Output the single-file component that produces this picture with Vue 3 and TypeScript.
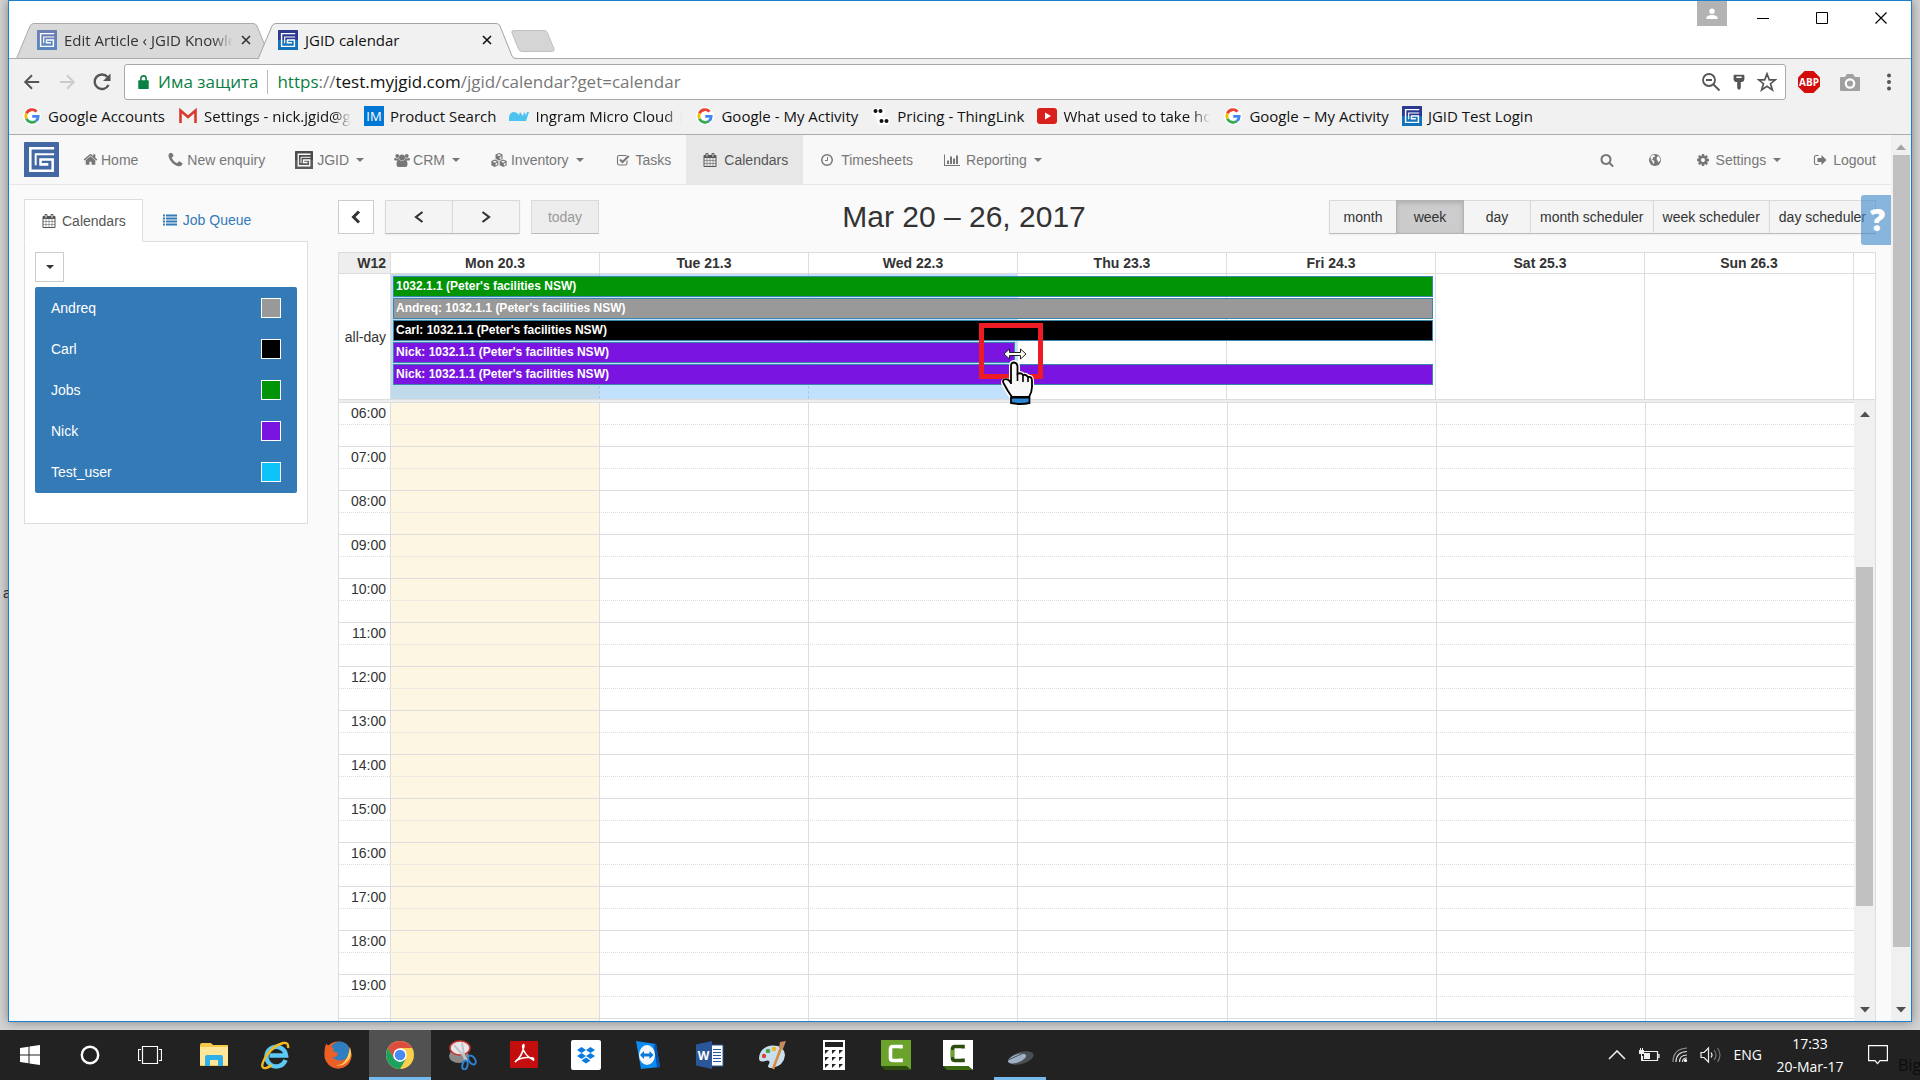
<script setup lang="ts">
import { h, ref, type FunctionalComponent } from 'vue'

interface Bookmark { icon: string; label: string; cut?: boolean }
interface NavItem { icon: string; label: string; caret?: boolean; active?: boolean }
interface CalendarEvent { title: string; color: string; span: number; resizing?: boolean }
interface CalendarOwner { name: string; color: string }

const bookmarks: Bookmark[] = [
  { icon: 'google', label: 'Google Accounts' },
  { icon: 'gmail', label: 'Settings - nick.jgid@g', cut: true },
  { icon: 'im', label: 'Product Search' },
  { icon: 'cloud', label: 'Ingram Micro Cloud |', cut: true },
  { icon: 'google', label: 'Google - My Activity' },
  { icon: 'thing', label: 'Pricing - ThingLink' },
  { icon: 'youtube', label: 'What used to take hou', cut: true },
  { icon: 'google', label: 'Google – My Activity' },
  { icon: 'jgid', label: 'JGID Test Login' },
]

const nav: NavItem[] = [
  { icon: 'home', label: 'Home' },
  { icon: 'phone', label: 'New enquiry' },
  { icon: 'jgidGray', label: 'JGID', caret: true },
  { icon: 'users', label: 'CRM', caret: true },
  { icon: 'cubes', label: 'Inventory', caret: true },
  { icon: 'check', label: 'Tasks' },
  { icon: 'calendar', label: 'Calendars', active: true },
  { icon: 'clock', label: 'Timesheets' },
  { icon: 'chart', label: 'Reporting', caret: true },
]

const owners: CalendarOwner[] = [
  { name: 'Andreq', color: '#999999' },
  { name: 'Carl', color: '#000000' },
  { name: 'Jobs', color: '#009406' },
  { name: 'Nick', color: '#7a14e0' },
  { name: 'Test_user', color: '#0dc4f9' },
]

const days = ['Mon 20.3', 'Tue 21.3', 'Wed 22.3', 'Thu 23.3', 'Fri 24.3', 'Sat 25.3', 'Sun 26.3']
const hours = Array.from({ length: 14 }, (_, i) => `${String(i + 6).padStart(2, '0')}:00`)
const views = ['month', 'week', 'day', 'month scheduler', 'week scheduler', 'day scheduler']
const view = ref('week')
const address = ref('https://test.myjgid.com/jgid/calendar?get=calendar')

const events: CalendarEvent[] = [
  { title: "1032.1.1 (Peter's facilities NSW)", color: '#009406', span: 5 },
  { title: "Andreq: 1032.1.1 (Peter's facilities NSW)", color: '#999999', span: 5 },
  { title: "Carl: 1032.1.1 (Peter's facilities NSW)", color: '#000000', span: 5 },
  { title: "Nick: 1032.1.1 (Peter's facilities NSW)", color: '#7a14e0', span: 3, resizing: true },
  { title: "Nick: 1032.1.1 (Peter's facilities NSW)", color: '#7a14e0', span: 5 },
]

const logo = (a: string, b: string) =>
  `<rect width="36" height="36" rx="1" fill="${a}"/><rect y="18" width="36" height="18" rx="1" fill="${b}"/>
   <path d="M31 6.500H6.500V29.500H29.500V18H17V23H25" fill="none" stroke="#fff" stroke-width="2.600"/><path d="M31 12.500H12V24" fill="none" stroke="#fff" stroke-width="2"/>`

const icons: Record<string, [string, string]> = {
  jgid: ['0 0 36 36', logo('#2b3990', '#1273ba')],
  jgidPale: ['0 0 36 36', logo('#6a7fb5', '#5c86c0')],
  jgidGray: ['0 0 36 36', logo('#4a4a4a', '#5c5c5c')],
  jgidNav: ['0 0 36 36', logo('#4468a4', '#4468a4')],
  home: ['0 0 1792 1792', '<path d="M1472 992v480q0 26-19 45t-45 19h-384v-384h-256v384h-384q-26 0-45-19t-19-45v-480q0-1 .5-3t.5-3l575-474 575 474q1 2 1 6zm223-69l-62 74q-8 9-21 11h-3q-13 0-21-7l-692-577-692 577q-12 8-24 7-13-2-21-11l-62-74q-8-10-7-23.500t11-21.500l719-599q32-26 76-26t76 26l244 204v-195q0-14 9-23t23-9h192q14 0 23 9t9 23v408l219 182q10 8 11 21.500t-7 23.500z"/>'],
  phone: ['192 192 1408 1408', '<path d="M1600 1240q0 27-10 70.500t-21 68.500q-21 50-122 106-94 51-186 51-27 0-53-3.500t-57.500-12.500-47-14.500-55.500-20.500-49-18q-98-35-175-83-127-79-264-216t-216-264q-48-77-83-175-3-9-18-49t-20.500-55.500-14.500-47-12.500-57.500-3.500-53q0-92 51-186 56-101 106-122 25-11 68.500-21t70.500-10q14 0 21 3 18 6 53 76 11 19 30 54t35 63.500 31 53.500q3 4 17.500 25t21.500 35.500 7 28.500q0 20-28.500 50t-62 55-62 53-28.500 46q0 9 5 22.500t8.500 20.500 14 24 11.500 19q76 137 174 235t235 174q2 1 19 11.500t24 14 20.500 8.500 22.500 5q18 0 46-28.500t53-62 55-62 50-28.500q14 0 28.500 7t35.500 21.500 25 17.500q25 15 53.500 31t63.500 35 54 30q70 35 76 53 3 7 3 21z"/>'],
  users: ['0 0 32 28', '<circle cx="6.500" cy="6" r="3.800"/><circle cx="25.500" cy="6" r="3.800"/><path d="M0 12q1-3 3-2 3.500 2 6.500 0 0 3 2 5H3q-3 0-3-3zM32 12q-1-3-3-2-3.500 2-6.500 0 0 3-2 5H29q3 0 3-3z"/><circle cx="16" cy="9" r="6"/><path d="M5 23q0-9 5-9.500 6 4 12 0 5 .5 5 9.500 0 5-4.500 5h-13Q5 28 5 23z"/>'],
  cubes: ['0 0 36 32', '<path fill-rule="evenodd" d="M18 0l8 3.500V13l-8 4-8-4V3.500zM18 2.500L13 5l5 2 5-2zM19.500 9.500v4.500l4-2V7.500zM8.500 15l8 3.500V28l-8 4-8-4v-9.500zM8.500 17.500L3.500 20l5 2 5-2zM10 24.500V29l4-2v-4.500zM27.500 15l8 3.500V28l-8 4-8-4v-9.500zM27.500 17.500l-5 2.500 5 2 5-2zM29 24.500V29l4-2v-4.500z"/>'],
  check: ['0 0 28 28', '<path d="M22 15v5.500Q22 24 18.500 24h-12Q3 24 3 20.500v-12Q3 5 6.500 5h12q1.500 0 2.500.5" fill="none" stroke="currentColor" stroke-width="2.200"/><path d="M8 13l5 5L25.500 6" fill="none" stroke="currentColor" stroke-width="4"/>'],
  calendar: ['0 0 1792 1792', '<path d="M192 1664h288v-288h-288v288zm352 0h320v-288h-320v288zm-352-352h288v-320h-288v320zm352 0h320v-320h-320v320zm-352-384h288v-288h-288v288zm736 736h320v-288h-320v288zm-384-736h320v-288h-320v288zm768 736h288v-288h-288v288zm-384-352h320v-320h-320v320zm-352-864v-288q0-13-9.500-22.500t-22.500-9.500h-64q-13 0-22.500 9.500t-9.500 22.500v288q0 13 9.500 22.500t22.500 9.500h64q13 0 22.500-9.500t9.500-22.500zm736 864h288v-320h-288v320zm-384-384h320v-288h-320v288zm384 0h288v-288h-288v288zm32-480v-288q0-13-9.500-22.500t-22.500-9.500h-64q-13 0-22.500 9.500t-9.500 22.500v288q0 13 9.500 22.500t22.500 9.500h64q13 0 22.500-9.500t9.500-22.500zm384-64v1280q0 52-38 90t-90 38h-1408q-52 0-90-38t-38-90v-1280q0-52 38-90t90-38h128v-96q0-66 47-113t113-47h64q66 0 113 47t47 113v96h384v-96q0-66 47-113t113-47h64q66 0 113 47t47 113v96h128q52 0 90 38t38 90z"/>'],
  clock: ['0 0 28 28', '<circle cx="14" cy="14" r="10.500" fill="none" stroke="currentColor" stroke-width="3"/><path d="M15 8v7h-5" fill="none" stroke="currentColor" stroke-width="2"/>'],
  chart: ['0 0 32 28', '<path d="M0 3h2v21h30v2H0zM6 15h4v7H6zM12 7h4v15h-4zM18 11h4v11h-4zM24 5h4v17h-4z"/>'],
  search: ['0 0 1792 1792', '<path d="M1216 832q0-185-131.500-316.500t-316.500-131.500-316.500 131.500-131.500 316.500 131.500 316.500 316.500 131.500 316.500-131.500 131.500-316.500zm512 832q0 52-38 90t-90 38q-54 0-90-38l-343-342q-179 124-399 124-143 0-273.500-55.500t-225-150-150-225-55.500-273.500 55.500-273.500 150-225 225-150 273.500-55.500 273.500 55.500 225 150 150 225 55.500 273.500q0 220-124 399l343 343q37 37 37 90z"/>'],
  globe: ['0 0 28 28', '<circle cx="14" cy="14" r="12"/><path d="M5 7q4-4 8-3l1 3-4 2v2l-3 2 3 1 3 3-2 5q-2-1-2-5-4-2-4-10zM18 8l3-2q4 4 4 8l-4 5-2-4-2-3z" fill="#f8f8f8"/>'],
  gear: ['0 0 1792 1792', '<path d="M1152 896q0-106-75-181t-181-75-181 75-75 181 75 181 181 75 181-75 75-181zm512-109v222q0 12-8 23t-20 13l-185 28q-19 54-39 91 35 50 107 138 10 12 10 25t-9 23q-27 37-99 108t-94 71q-12 0-26-9l-138-108q-44 23-91 38-16 136-29 186-7 28-36 28h-222q-14 0-24.500-8.500t-11.500-21.500l-28-184q-49-16-90-37l-141 107q-10 9-25 9-14 0-25-11-126-114-165-168-7-10-7-23 0-12 8-23 15-21 51-66.500t54-70.500q-27-50-41-99l-183-27q-13-2-21-12.500t-8-23.500v-222q0-12 8-23t19-13l186-28q14-46 39-92-40-57-107-138-10-12-10-24 0-10 9-23 26-36 98.500-107.500t94.500-71.500q13 0 26 10l138 107q44-23 91-38 16-136 29-186 7-28 36-28h222q14 0 24.500 8.500t11.500 21.500l28 184q49 16 90 37l142-107q9-9 24-9 13 0 25 10 129 119 165 170 7 8 7 22 0 12-8 23-15 21-51 66.500t-54 70.500q26 50 41 98l183 28q13 2 21 12.500t8 23.500z"/>'],
  logout: ['0 0 28 28', '<path d="M11 5H6Q3 5 3 8v12q0 3 3 3h5" fill="none" stroke="currentColor" stroke-width="2.200"/><path d="M9 10h8V4l10 10-10 10v-6H9z"/>'],
  list: ['0 0 28 28', '<path d="M0 3h4v4H0zM6 3h22v4H6zM0 9h4v4H0zM6 9h22v4H6zM0 15h4v4H0zM6 15h22v4H6zM0 21h4v4H0zM6 21h22v4H6z"/>'],
  chevronLeft: ['0 0 14 14', '<path d="M10 1.500L4.500 7l5.500 5.500" fill="none" stroke="currentColor" stroke-width="3"/>'],
  angleLeft: ['0 0 14 14', '<path d="M10.500 2L4 7l6.500 5" fill="none" stroke="currentColor" stroke-width="2.200"/>'],
  angleRight: ['0 0 14 14', '<path d="M3.500 2L10 7l-6.500 5" fill="none" stroke="currentColor" stroke-width="2.200"/>'],
  back: ['0 0 20 20', '<path d="M18 10H3M10 2.500L2.500 10l7.500 7.500" fill="none" stroke="currentColor" stroke-width="2.200"/>'],
  forward: ['0 0 20 20', '<path d="M2 10h15M10 2.500l7.500 7.500-7.500 7.500" fill="none" stroke="currentColor" stroke-width="2.200"/>'],
  reload: ['0 0 20 20', '<path d="M16.500 13A7.300 7.300 0 1 1 15.500 5" fill="none" stroke="currentColor" stroke-width="2.400"/><path d="M18.500 1.500v7.500H11z"/>'],
  lock: ['0 0 12 16', '<path d="M1 6h10q1 0 1 1v8q0 1-1 1H1q-1 0-1-1V7q0-1 1-1z"/><path d="M3 7V4a3 3 0 0 1 6 0v3" fill="none" stroke="currentColor" stroke-width="1.800"/>'],
  zoomOut: ['0 0 20 20', '<circle cx="8" cy="8" r="6" fill="none" stroke="currentColor" stroke-width="1.800"/><path d="M5 8h6M12.500 12.500l6 6" stroke="currentColor" stroke-width="1.800"/>'],
  key: ['0 0 16 20', '<path fill-rule="evenodd" d="M3 2h10q1 0 1 1v4q0 2-2 3h-2v7l-2 2-2-2v-7H4Q2 9 2 7V3q0-1 1-1zm2 2v1.500h6V4z"/>'],
  star: ['0 0 20 20', '<path d="M10 1.800l2.300 6h6.100l-4.900 3.900 1.900 6.200L10 14.300l-5.400 3.600 1.900-6.200L1.600 7.800h6.100z" fill="none" stroke="currentColor" stroke-width="1.700"/>'],
  abp: ['0 0 22 22', '<path d="M6.500 0h9L22 6.500v9L15.500 22h-9L0 15.500v-9z" fill="#d40c0c"/><text x="11" y="14.500" text-anchor="middle" font-family="Open Sans, sans-serif" font-weight="700" font-size="10" fill="#fff">ABP</text>'],
  camera: ['0 0 20 18', '<path d="M7 1h6l2 3h4q1 0 1 1v12q0 1-1 1H1q-1 0-1-1V5q0-1 1-1h4z" fill="#a0a0a0"/><circle cx="10" cy="10.500" r="4.200" fill="#a0a0a0" stroke="#fff" stroke-width="2.200"/>'],
  dots: ['0 0 6 18', '<circle cx="3" cy="2.500" r="2"/><circle cx="3" cy="9" r="2"/><circle cx="3" cy="15.500" r="2"/>'],
  person: ['0 0 12 12', '<circle cx="6" cy="3.200" r="2.700"/><path d="M.5 11V9.500Q1 7 6 7t5.500 2.500V11z"/>'],
  minimize: ['0 0 12 12', '<path d="M0 6.500h12" stroke="currentColor"/>'],
  maximize: ['0 0 12 12', '<path d="M.5.5h11v11H.5z" fill="none" stroke="currentColor"/>'],
  close: ['0 0 12 12', '<path d="M.5.5l11 11M11.500.5l-11 11" stroke="currentColor" stroke-width="1.200"/>'],
  tabClose: ['0 0 10 10', '<path d="M1 1l8 8M9 1L1 9" stroke="currentColor" stroke-width="1.600"/>'],
  google: ['0 0 20 20', '<circle cx="10" cy="10" r="9" fill="#fff"/><g fill="none" stroke-width="2.800"><path d="M14.600 5.600A6.200 6.200 0 0 0 4.400 7.400" stroke="#ea4335"/><path d="M4.400 7.400a6.200 6.200 0 0 0 0 5.300" stroke="#fbbc05"/><path d="M4.400 12.700a6.200 6.200 0 0 0 9.600 2.300" stroke="#34a853"/><path d="M14 15a6.200 6.200 0 0 0 2.200-4.600H10.200" stroke="#4285f4"/></g>'],
  gmail: ['0 0 20 16', '<path d="M1 1h18v14H1z" fill="#f2f2f2"/><path d="M2.500 15V2.500L10 9l7.500-6.500V15" fill="none" stroke="#d93a2f" stroke-width="2.600"/>'],
  im: ['0 0 20 20', '<path d="M0 0h20v20H0z" fill="#0077d4"/><text x="10" y="15" text-anchor="middle" font-family="Open Sans, sans-serif" font-size="13" fill="#fff">IM</text>'],
  cloud: ['0 0 20 12', '<path d="M0 11V7q1-5 5-5 3 0 5 3l1-3 3 4 1-4 2 3 1-3h2l-3 9z" fill="#4cc3f0"/>'],
  thing: ['0 0 20 20', '<g fill="#fff"><circle cx="5" cy="6" r="4"/><circle cx="10" cy="6" r="4"/><circle cx="10" cy="15" r="4"/><circle cx="15" cy="15" r="4"/><circle cx="8" cy="11" r="3"/></g><circle cx="4.500" cy="5" r="2" fill="#111"/><circle cx="9.500" cy="5" r="2" fill="#111"/><circle cx="10.500" cy="15" r="2" fill="#111"/><circle cx="15.500" cy="15" r="2" fill="#111"/>'],
  youtube: ['0 0 20 16', '<rect width="20" height="16" rx="3" fill="#d8201c"/><path d="M8 4.500l6 3.500-6 3.500z" fill="#fff"/>'],
  caretUp: ['0 0 10 6', '<path d="M0 6l5-5.500L10 6z"/>'],
  caretDown: ['0 0 10 6', '<path d="M0 0l5 5.500L10 0z"/>'],
  resize: ['0 0 24 12', '<path d="M1 6l5.500-5v3.500h11V1L23 6l-5.500 5V7.500h-11V11z" fill="#fff" stroke="#222"/>'],
  hand: ['0 0 34 46', '<path d="M11 24V6q0-4 3-4t4 4v8q3-2 5.500 1 3-1 4.500 2 4-1 4 4v6q0 5-3 10v7H12v-6q-5-7-8-13-2-3 0-4.500 4-1.500 7 3.500z" fill="#fff" stroke="#fff" stroke-width="4"/><path d="M11 24V6q0-3.500 3-3.500T17.500 6v8q3.500-2 5.500 1 3-1 5 2 4-1 4 4v6q0 5-3 10H12q-5-7-8-13-2-3 0-4.500 4-1.500 7 3.500z" fill="#f8f8f8" stroke="#000" stroke-width="1.800"/><path d="M17.500 14v7M23 15v7M28 17v5" stroke="#000" stroke-width="1.600"/><path d="M11 37.500h18.500v5.500q-9 2-18.500 0z" fill="#2c86d2" stroke="#000" stroke-width="1.800"/>'],
  windows: ['0 0 20 20', '<path d="M0 3l8.500-1.200V9.500H0zM9.500 1.600L20 0v9.500H9.500zM0 10.500h8.500v7.700L0 17zM9.500 10.500H20V20L9.500 18.400z" fill="#fff"/>'],
  cortana: ['0 0 20 20', '<circle cx="10" cy="10" r="8.200" fill="none" stroke="#fff" stroke-width="2.400"/>'],
  taskView: ['0 0 24 20', '<path d="M4.500 1.500h15v17h-15zM3 4.500H.5v11H3M21 4.500h2.500v11H21" fill="none" stroke="#fff" stroke-width="1.200"/>'],
  folder: ['0 0 30 30', '<path d="M1 5q0-2 2-2h9l2 2h15v21H1z" fill="#f5c84a"/><path d="M1 7h28v18H1z" fill="#ffe699"/><path d="M6 26v-9q0-2 2-2h14q2 0 2 2v9h-5v-6h-8v6z" fill="#2fb0e8"/>'],
  ie: ['0 0 30 30', '<path d="M24.500 20A9.800 9.800 0 1 1 25 15.500H8.500" fill="none" stroke="#5cc8f6" stroke-width="4.500"/><path d="M27 8q1-6-5-5Q11 6 4 18q-6 11 1 10 3-.5 6-3" fill="none" stroke="#f4bb1e" stroke-width="2.400"/>'],
  firefox: ['0 0 30 30', '<circle cx="15" cy="15" r="13.500" fill="#e8612a"/><circle cx="17" cy="11" r="9.500" fill="#2e7fc2"/><path d="M27 7q2 8-2 13-6 8-14 4-5-3-3-8 3 2 6 0l1-3-4-1-1-4-7-4Q0 12 3 20q4 8 12 8.500 13-1 13.500-14z" fill="#ee5f25"/><path d="M27 7q3 10-3 15-5 5-11 3 11 1 14-18z" fill="#fbd35c"/>'],
  chrome: ['0 0 30 30', '<circle cx="15" cy="15" r="14" fill="#fcd04b"/><path d="M2.900 8A14 14 0 0 1 27.100 8H15l-6 10.500z" fill="#dc4d40"/><path d="M2.900 8A14 14 0 0 0 15 29l6.100-10.500L15 22l-6-3.500z" fill="#1ba260"/><circle cx="15" cy="15" r="6.800" fill="#fff"/><circle cx="15" cy="15" r="5.300" fill="#4a8af4"/>'],
  snip: ['0 0 30 30', '<ellipse cx="12" cy="16" rx="10" ry="7" fill="#8a8a8a"/><ellipse cx="13" cy="8" rx="10" ry="7" fill="#e8e8ec" stroke="#c63a33" stroke-width="1.500"/><path d="M7 5l14 16M15 3l3 18" stroke="#c0c4c8" stroke-width="2"/><ellipse cx="25" cy="20" rx="3" ry="5" fill="none" stroke="#2f7fd2" stroke-width="2" transform="rotate(-35 25 20)"/><ellipse cx="18" cy="25" rx="2.500" ry="4.500" fill="none" stroke="#2f7fd2" stroke-width="2" transform="rotate(15 18 25)"/>'],
  acrobat: ['0 0 30 30', '<path d="M1 1h28v27H1z" fill="#c40d0d"/><path d="M6 22q7-5 9-16 0-3-1.500 0 1 9 11 14 1-3-7-2.500Q10 18 6 22" fill="none" stroke="#fff" stroke-width="1.600"/>'],
  dropbox: ['0 0 30 30', '<rect width="30" height="30" rx="2" fill="#fff"/><path d="M10.500 7l4.500 3-4.500 3L6 10zM19.500 7l4.500 3-4.500 3-4.500-3zM10.500 13l4.500 3-4.500 3L6 16zM19.500 13l4.500 3-4.500 3-4.500-3zM15 17.500l4.500 3L15 23.500l-4.500-3z" fill="#0a7be0"/>'],
  teamviewer: ['0 0 30 30', '<path d="M3 1l20 3 4 23-19 2z" fill="#0a8cf0"/><path d="M23 4l4 23-3 1-3-23z" fill="#0650b0"/><ellipse cx="14" cy="15" rx="8" ry="10" fill="#f4f8fc"/><path d="M7 15l4-4v2.500h5.500V11l4 4-4 4v-2.500H11V19z" fill="#0a78d8"/>'],
  word: ['0 0 30 30', '<path d="M15 5h13v21H15z" fill="#fff" stroke="#2b579a"/><path d="M18 9.500h8M18 12.500h8M18 15.500h8M18 18.500h8M18 21.500h8" stroke="#2b579a" stroke-width="1.200"/><path d="M1 4.500L17 1v28L1 25.500z" fill="#2b579a"/><text x="8.500" y="20" text-anchor="middle" font-family="Open Sans, sans-serif" font-weight="700" font-size="12" fill="#fff">W</text>'],
  paint: ['0 0 30 30', '<path d="M2 18Q3 7 15 5.500q12-.5 13 9.500-1 11-13 13-6 0-3-4 2-5-4-3-6 2-6-3z" fill="#c8dff0"/><circle cx="7" cy="16" r="2.200" fill="#d8433b"/><circle cx="11" cy="11" r="2.300" fill="#4aa34a"/><circle cx="17" cy="9" r="2.300" fill="#f0b52a"/><path d="M16 29l8-21" stroke="#d98b3a" stroke-width="2.600"/><path d="M22 8l1-6 6-1-3 8z" fill="#c58b5c"/>'],
  calc: ['0 0 30 30', '<path d="M4 0h22v30H4z" fill="#fff"/><path d="M6 2h18v5H6zM6 10h4l-4 4zM13 10h4l-4 4zM20 10h4l-4 4zM6 17h4l-4 4zM13 17h4l-4 4zM20 17h4l-4 4zM6 24h4l-4 4zM13 24h4l-4 4zM20 24h4l-4 4z" fill="#222"/>'],
  camtasia: ['0 0 30 30', '<path d="M0 0h30v30l-5-4H0z" fill="#6aa22c"/><path d="M0 26h25l5 4H4z" fill="#2c4d0e"/><path d="M20 8.500V6.500H12Q9.500 6.500 9.500 9v9q0 2.500 2.500 2.500h8V18.500" fill="none" stroke="#fff" stroke-width="3.600"/>'],
  camtasiaLight: ['0 0 30 30', '<path d="M0 0h30v30l-5-4H0z" fill="#fff"/><path d="M0 26h25l5 4H4z" fill="#3c6a10"/><path d="M20 8.500V6.500H12Q9.500 6.500 9.500 9v9q0 2.500 2.500 2.500h8V18.500" fill="none" stroke="#2c4d0e" stroke-width="3.600"/><path d="M9.500 10v7" stroke="#6aa22c" stroke-width="3.600"/>'],
  mouse: ['0 0 30 30', '<ellipse cx="16" cy="18" rx="13" ry="6" fill="#4b4f55" transform="rotate(-16 16 18)"/><ellipse cx="12" cy="18.500" rx="9.500" ry="4" fill="#9db0c4" transform="rotate(-20 12 18.500)"/><path d="M3 20l18-8" stroke="#4b4f55"/>'],
  trayUp: ['0 0 18 10', '<path d="M1 9l8-8 8 8" fill="none" stroke="#eee" stroke-width="1.600"/>'],
  battery: ['0 0 22 16', '<path d="M6 4.500h13.500v9H4.500V9M19.500 7.500h1.500v3h-1.500" fill="none" stroke="#eee" stroke-width="1.200"/><path d="M6 6h6v6H6zM1 3h5v4H1zM2 1h1v3H2zM4 1h1v3H4zM3 7h1v7h-1z" fill="#eee"/>'],
  wifi: ['0 0 16 16', '<g fill="none" stroke="#ddd" stroke-width="1.200"><path d="M1 15Q1 2 15 1" opacity=".6"/><path d="M4 15Q4 5 15 4.500"/><path d="M7.500 15q0-7 7.500-7"/><path d="M10.500 15q0-4 4.500-4"/></g><circle cx="13.500" cy="13.500" r="1.600" fill="#fff"/>'],
  volume: ['0 0 22 16', '<path d="M1 5.500h3L8.500 1v14L4 10.500H1z" fill="none" stroke="#eee" stroke-width="1.200"/><path d="M11 5.500q2 2.500 0 5" fill="none" stroke="#eee" stroke-width="1.200"/><path d="M14 3q4 5 0 10M17.500 1q5 7 0 14" fill="none" stroke="#777" stroke-width="1.200"/>'],
  notify: ['0 0 20 20', '<path d="M.6.6h18.800v15H12l-2.500 3-2.500-3H.6z" fill="none" stroke="#fff" stroke-width="1.200"/>'],
}

const Icon: FunctionalComponent<{ name: string }> = (props) =>
  h('svg', { viewBox: icons[props.name][0], innerHTML: icons[props.name][1], fill: 'currentColor', 'aria-hidden': 'true' })
Icon.props = ['name']

const launchers = ['folder', 'ie', 'firefox', 'chrome', 'snip', 'acrobat', 'dropbox', 'teamviewer', 'word', 'paint', 'calc', 'camtasia', 'camtasiaLight', 'mouse']
</script>

<template>
  <div class="desktop">
    <span class="desk-label" aria-hidden="true">a</span>
    <div class="window">
      <header class="title-bar">
        <div class="tabs">
          <div class="tab tab-back">
            <svg class="tab-shape" viewBox="0 0 250 36"><path d="M.5 35.500L14 3Q15 .5 18 .5H237Q240 .5 241 3L249.500 24L244 35.500z" fill="#d9d9d9" stroke="#ababab" /></svg>
            <Icon name="jgidPale" class="i20" />
            <span class="tab-title faded">Edit Article ‹ JGID Knowle</span>
            <button class="plain" aria-label="Close tab"><Icon name="tabClose" class="i10" /></button>
          </div>
          <div class="tab tab-front">
            <svg class="tab-shape" viewBox="0 0 258 36"><path d="M0 36L14 3Q15 .5 18 .5H238Q241 .5 242 3L254 33Q255 35.500 258 36z" fill="#f1f1f1" /><path d="M0 36L14 3Q15 .5 18 .5H238Q241 .5 242 3L254 33Q255 35.500 258 35.500" fill="none" stroke="#a3a3a3" /></svg>
            <Icon name="jgid" class="i20" />
            <span class="tab-title">JGID calendar</span>
            <button class="plain" aria-label="Close tab"><Icon name="tabClose" class="i10" /></button>
          </div>
          <button class="plain new-tab" aria-label="New tab"><svg viewBox="0 0 44 22"><path d="M1 3Q0 .5 3 .5H33Q35.500.5 36.500 3L43 19Q43.500 21.500 41 21.500H11Q8.500 21.500 7.500 19z" fill="#d5d5d5" stroke="#c0c0c0" /></svg></button>
        </div>
        <div class="window-controls">
          <button class="plain user" aria-label="Profile"><Icon name="person" class="i12" /></button>
          <button class="plain" aria-label="Minimize"><Icon name="minimize" class="i12" /></button>
          <button class="plain" aria-label="Maximize"><Icon name="maximize" class="i12" /></button>
          <button class="plain" aria-label="Close"><Icon name="close" class="i12" /></button>
        </div>
      </header>

      <div class="toolbar">
        <button class="plain tool" aria-label="Back"><Icon name="back" class="i18" /></button>
        <button class="plain tool dim" aria-label="Forward"><Icon name="forward" class="i18" /></button>
        <button class="plain tool" aria-label="Reload"><Icon name="reload" class="i20" /></button>
        <div class="omnibox">
          <Icon name="lock" class="lock" />
          <span class="secure">Има защита</span>
          <label class="url">
            <span class="url-text"><span class="url-scheme">https</span>://<span class="url-host">test.myjgid.com</span>/jgid/calendar?get=calendar</span>
            <input v-model="address" class="url-input" type="text" aria-label="Address" />
          </label>
          <button class="plain" aria-label="Zoom"><Icon name="zoomOut" class="i20" /></button>
          <button class="plain" aria-label="Saved password"><Icon name="key" class="i18" /></button>
          <button class="plain" aria-label="Bookmark"><Icon name="star" class="i20" /></button>
        </div>
        <div class="extensions">
          <button class="plain" aria-label="Adblock Plus"><Icon name="abp" class="i22" /></button>
          <button class="plain" aria-label="Screenshot"><Icon name="camera" class="i20" /></button>
          <button class="plain" aria-label="Menu"><Icon name="dots" class="i18" /></button>
        </div>
      </div>

      <nav class="bookmarks" aria-label="Bookmarks">
        <a v-for="(b, i) in bookmarks" :key="i" href="#"><Icon :name="b.icon" class="i20" /><span :class="{ cut: b.cut }">{{ b.label }}</span></a>
      </nav>

      <div class="viewport">
        <div class="page">
          <nav class="navbar">
            <a href="#" class="brand" aria-label="JGID"><Icon name="jgidNav" class="brand-logo" /></a>
            <a v-for="n in nav" :key="n.label" href="#" class="nav-link" :class="{ active: n.active }">
              <Icon :name="n.icon" class="nav-icon" :class="n.icon" />{{ n.label }}<i v-if="n.caret" class="caret" />
            </a>
            <span class="spacer" />
            <a href="#" class="nav-link" aria-label="Search"><Icon name="search" class="nav-icon" /></a>
            <a href="#" class="nav-link" aria-label="Language"><Icon name="globe" class="nav-icon" /></a>
            <a href="#" class="nav-link"><Icon name="gear" class="nav-icon" />Settings<i class="caret" /></a>
            <a href="#" class="nav-link"><Icon name="logout" class="nav-icon" />Logout</a>
          </nav>

          <div class="content">
            <aside class="sidebar">
              <div class="side-tabs">
                <a href="#" class="side-tab current"><Icon name="calendar" class="i14" />Calendars</a>
                <a href="#" class="side-tab"><Icon name="list" class="i14" />Job Queue</a>
              </div>
              <div class="side-panel">
                <button class="menu-button" aria-label="Calendar options"><i class="caret" /></button>
                <ul class="owners">
                  <li v-for="o in owners" :key="o.name">{{ o.name }}<span class="swatch" :style="{ background: o.color }" /></li>
                </ul>
              </div>
            </aside>

            <main class="calendar">
              <div class="cal-toolbar">
                <div class="cal-left">
                  <button class="collapse" aria-label="Hide sidebar"><Icon name="chevronLeft" class="i14" /></button>
                  <div class="group">
                    <button class="step" aria-label="Previous"><Icon name="angleLeft" class="i14" /></button>
                    <button class="step" aria-label="Next"><Icon name="angleRight" class="i14" /></button>
                  </div>
                  <button class="today" disabled>today</button>
                </div>
                <h2>Mar 20 – 26, 2017</h2>
                <div class="group">
                  <button v-for="v in views" :key="v" :class="{ down: v === view }" @click="view = v">{{ v }}</button>
                </div>
              </div>

              <div class="board">
                <table class="head">
                  <colgroup><col class="axis-col" /><col v-for="d in days" :key="d" /><col class="gutter-col" /></colgroup>
                  <thead><tr><th class="week-no">W12</th><th v-for="d in days" :key="d">{{ d }}</th><td /></tr></thead>
                </table>
                <div class="all-day">
                  <div class="all-day-label">all-day</div>
                  <div class="all-day-body">
                    <div class="all-day-bg"><span v-for="(d, i) in days" :key="d" :class="{ picked: i < 3, now: i === 0 }" /></div>
                    <div class="events">
                      <div v-for="(e, i) in events" :key="i" class="event-slot" :style="{ gridColumn: `1 / span ${e.span}` }">
                        <a href="#" class="event" :style="{ background: e.color }">{{ e.title }}</a>
                        <div v-if="e.resizing" class="marker">
                          <Icon name="resize" class="resize" />
                          <Icon name="hand" class="hand" />
                        </div>
                      </div>
                    </div>
                  </div>
                  <div class="all-day-gutter" />
                </div>
                <div class="divider" />
                <div class="time-area">
                  <table class="times">
                    <colgroup><col class="axis-col" /><col v-for="d in days" :key="d" /></colgroup>
                    <tbody v-for="t in hours" :key="t">
                      <tr><th scope="row">{{ t }}</th><td v-for="(d, i) in days" :key="d" :class="{ now: i === 0 }" /></tr>
                      <tr class="half"><td /><td v-for="(d, i) in days" :key="d" :class="{ now: i === 0 }" /></tr>
                    </tbody>
                    <tbody><tr><td /><td v-for="(d, i) in days" :key="d" :class="{ now: i === 0 }" /></tr></tbody>
                  </table>
                  <div class="scrollbar inner">
                    <Icon name="caretUp" class="arrow" />
                    <div class="track"><span class="before" /><span class="thumb" /><span class="after" /></div>
                    <Icon name="caretDown" class="arrow" />
                  </div>
                </div>
              </div>
            </main>
          </div>
          <button class="help" aria-label="Help">?</button>
        </div>
        <div class="scrollbar outer">
          <Icon name="caretUp" class="arrow faint" />
          <div class="track"><span class="thumb" /><span class="after" /></div>
          <Icon name="caretDown" class="arrow" />
        </div>
      </div>
    </div>

    <footer class="taskbar">
      <button class="plain start" aria-label="Start"><Icon name="windows" class="i20" /></button>
      <button class="plain start" aria-label="Cortana"><Icon name="cortana" class="i20" /></button>
      <button class="plain start wide" aria-label="Task view"><Icon name="taskView" class="i24" /></button>
      <button v-for="l in launchers" :key="l" class="plain launcher" :class="l" :aria-label="l"><Icon :name="l" class="i30" /></button>
      <span class="spacer" />
      <div class="tray">
        <Icon name="trayUp" class="tray-up" />
        <Icon name="battery" class="i22" />
        <Icon name="wifi" class="i16" />
        <Icon name="volume" class="i22" />
        <span class="lang">ENG</span>
        <time class="tray-clock"><span>17:33</span><span>20-Mar-17</span></time>
        <Icon name="notify" class="i20" />
        <span class="ghost" aria-hidden="true">Big</span>
      </div>
    </footer>
  </div>
</template>

<style>
body { margin: 0; }
</style>

<style scoped>
* { box-sizing: border-box; }
.desktop { position: relative; display: flex; flex-direction: column; height: 100vh; overflow: hidden; background: #d3d3d3; color: #333; font: 14px/20px "Liberation Sans", Arial, sans-serif; }
a { color: inherit; text-decoration: none; }
button { font: inherit; color: inherit; }
svg { display: block; flex: none; }
.plain { display: flex; align-items: center; justify-content: center; padding: 0; border: 0; background: none; }
.spacer { flex: 1; }
.i10 { width: 10px; height: 10px; }
.i12 { width: 12px; height: 12px; }
.i14 { width: 14px; height: 14px; }
.i16 { width: 16px; height: 16px; }
.i18 { width: 18px; height: 18px; }
.i20 { width: 20px; height: 20px; }
.i22 { width: 22px; height: 22px; }
.i24 { width: 24px; height: 20px; }
.i30 { width: 30px; height: 30px; }
.desk-label { position: absolute; left: 3px; top: 583px; font-size: 14px; color: #333; }

.window { display: flex; flex-direction: column; flex: 1; min-height: 0; margin: 0 8px 8px; border: 1px solid #1a7fcf; background: #fff; box-shadow: 0 0 10px rgba(0, 0, 0, 0.4); position: relative; overflow: hidden; font-family: "Open Sans", "Noto Sans", sans-serif; }
.title-bar { display: flex; justify-content: space-between; height: 58px; flex: none; border-bottom: 1px solid #a8a8a8; }
.tabs { display: flex; align-items: flex-end; padding-left: 7px; }
.tab { position: relative; display: flex; align-items: center; height: 36px; margin-bottom: -1px; padding: 0 15px 2px 21px; font-size: 15px; color: #333; }
.tab-shape { position: absolute; inset: 0; width: 100%; height: 36px; }
.tab > .i20, .tab > span, .tab > button { position: relative; }
.tab-back { width: 250px; }
.tab-front { width: 258px; margin-left: -8px; padding: 0 24px 2px 20px; color: #111; }
.tab-title { flex: 1; min-width: 0; margin: 0 8px 0 7px; white-space: nowrap; }
.faded, .cut { -webkit-mask-image: linear-gradient(90deg, #000 88%, transparent); mask-image: linear-gradient(90deg, #000 88%, transparent); }
.new-tab { width: 44px; height: 22px; margin: 0 0 6px -5px; }
.window-controls { display: flex; align-items: flex-start; padding-right: 1px; }
.window-controls button { width: 59px; height: 34px; color: #000; }
.window-controls .user { width: 30px; height: 25px; margin-right: 6px; background: #b3b3b3; color: #fff; }

.toolbar { display: flex; align-items: flex-start; height: 41px; flex: none; padding: 5px 0 0 5px; background: #f1f1f1; color: #555; }
.tool { width: 35px; height: 35px; }
.dim { color: #ccc; }
.omnibox { display: flex; align-items: center; flex: 1; height: 36px; margin-left: 5px; padding: 0 8px 0 13px; border: 1px solid #a9a9a9; border-radius: 3px; background: #fff; font-size: 17px; color: #555; gap: 9px; }
.lock { width: 11px; height: 14px; color: #0b8043; }
.secure { padding-right: 9px; border-right: 1px solid #bbb; color: #0b8043; line-height: 24px; white-space: nowrap; }
.url { position: relative; flex: 1; color: #777; white-space: nowrap; }
.url-input { position: absolute; inset: 0; width: 100%; padding: 0; border: 0; outline: 0; background: none; color: transparent; font: inherit; }
.url-scheme { color: #0b8043; }
.url-host { color: #111; }
.extensions { display: flex; align-items: center; gap: 20px; height: 36px; padding: 0 13px 0 12px; }

.bookmarks { display: flex; align-items: center; height: 35px; flex: none; gap: 13px; padding: 0 13px 3px; border-bottom: 1px solid #ababab; background: #f1f1f1; font-size: 15px; color: #111; }
.bookmarks a { display: flex; align-items: center; gap: 6px; white-space: nowrap; height: 26px; }
.bookmarks .cut { width: 147px; }

.viewport { display: flex; flex: 1; min-height: 0; background: #fafafa; font-family: "Liberation Sans", Arial, sans-serif; }
.page { position: relative; display: flex; flex-direction: column; flex: 1; min-width: 0; }
.navbar { display: flex; align-items: stretch; height: 50px; flex: none; padding-left: 15px; border-bottom: 1px solid #e7e7e7; background: #f8f8f8; color: #777; }
.brand { display: flex; align-items: center; margin-right: 9px; }
.brand-logo { width: 35px; height: 35px; }
.nav-link { display: flex; align-items: center; padding: 0 15px; white-space: nowrap; }
.nav-link.active { background: #e7e7e7; color: #555; }
.nav-icon { width: 18px; height: 14px; margin-right: 4px; }
.nav-link[aria-label] .nav-icon { margin-right: 0; }
.nav-icon.home { width: 15px; height: 15px; margin-right: 3px; }
.nav-icon.phone { width: 15px; }
.nav-icon.users { width: 16px; margin-right: 3px; }
.nav-icon.cubes { margin-right: 3px; }
.nav-icon.calendar, .nav-icon.clock, .nav-icon.chart { margin-right: 5px; }
.nav-icon.jgidGray { height: 18px; }
.caret { width: 0; height: 0; margin-left: 7px; border: 4px solid transparent; border-top-color: currentColor; border-bottom: 0; }

.content { display: flex; flex: 1; min-height: 0; gap: 30px; padding: 14px 15px 0; }
.sidebar { width: 284px; flex: none; }
.side-tabs { display: flex; }
.side-tab { display: flex; align-items: center; gap: 6px; height: 42px; padding: 0 16px 0 19px; border: 1px solid transparent; color: #337ab7; }
.side-tab.current { position: relative; height: 43px; margin-bottom: -1px; padding: 0 16px 0 17px; border-color: #ddd #ddd transparent; background: #fff; color: #555; z-index: 1; }
.side-panel { padding: 10px 10px 30px; border: 1px solid #ddd; background: #fff; }
.menu-button { display: flex; align-items: center; justify-content: center; width: 29px; height: 30px; padding: 0; border: 1px solid #ccc; background: #fff; }
.menu-button .caret { margin: 0; }
.owners { margin: 5px 0 0; padding: 0 0 1px; list-style: none; background: #337ab7; color: #fff; border-radius: 2px; }
.owners li { display: flex; align-items: center; justify-content: space-between; height: 41px; padding: 0 16px; }
.swatch { width: 20px; height: 20px; border: 1px solid #fff; }

.calendar { display: flex; flex-direction: column; flex: 1; min-width: 0; }
.cal-toolbar { display: flex; align-items: center; justify-content: space-between; height: 35px; flex: none; margin-bottom: 18px; }
.cal-left { display: flex; gap: 11px; align-items: center; }
h2 { margin: 0; font-size: 30px; line-height: 34px; font-weight: 400; }
.cal-toolbar button { display: flex; align-items: center; justify-content: center; height: 34px; padding: 0 9px; border: 1px solid #d9d9d9; border-bottom-color: #bbb; background: #f4f4f4; white-space: nowrap; }
.cal-toolbar .collapse { width: 36px; border-color: #ccc; background: #fff; }
.group { display: flex; }
.group button + button { margin-left: -1px; }
.group button { min-width: 68px; box-shadow: 0 1px 2px rgba(0, 0, 0, 0.05); }
.cal-toolbar .today { width: 68px; color: #999; background: #ededed; }
.cal-toolbar .down { position: relative; border-color: #b3b3b3; background: #ccc; box-shadow: inset 0 2px 4px rgba(0, 0, 0, 0.15); }

.board { display: flex; flex-direction: column; flex: 1; min-height: 0; border: 1px solid #ddd; border-bottom: 0; background: #fff; }
table { width: 100%; border-collapse: separate; border-spacing: 0; table-layout: fixed; }
.axis-col { width: 51px; }
.gutter-col { width: 22px; }
th, td { padding: 0; }
.head th, .head td { height: 21px; border-bottom: 1px solid #ddd; border-left: 1px solid #ddd; }
.head th.week-no { padding-right: 4px; border-left: 0; background: #eee; text-align: right; }
.all-day { display: flex; height: 126px; flex: none; border-bottom: 1px solid #ddd; }
.all-day-label { display: flex; align-items: center; justify-content: flex-end; width: 51px; padding-right: 4px; }
.all-day-body { position: relative; flex: 1; }
.all-day-gutter { width: 22px; border-left: 1px solid #ddd; }
.all-day-bg { position: absolute; inset: 0; display: grid; grid-template-columns: repeat(7, 1fr); }
.all-day-bg span { border-left: 1px solid #ddd; }
.all-day-bg .picked { border-left: 1px dashed #a9c8e6; background: #c1e1ff; }
.all-day-bg .now { border-left: 1px solid #ddd; background: #c0daec; }
.events { position: relative; display: grid; grid-template-columns: repeat(7, 1fr); grid-auto-rows: 22px; padding-top: 2px; }
.event-slot { position: relative; padding: 0 2px 0 3px; }
.event { display: block; height: 21px; padding-left: 2px; border: 1px solid #3a87ad; color: #fff; font-size: 12px; line-height: 19px; font-weight: 700; white-space: nowrap; }
.marker { position: absolute; right: -26px; top: -19px; width: 64px; height: 56px; border: 5px solid #ed1c24; z-index: 2; }
.resize { position: absolute; left: 19px; top: 20px; width: 24px; height: 12px; }
.hand { position: absolute; left: 16px; top: 32px; width: 34px; height: 46px; }
.divider { height: 2px; flex: none; background: #eee; }
.time-area { display: flex; flex: 1; min-height: 0; overflow: hidden; align-items: stretch; }
.times { flex: 1; align-self: flex-start; }
.times th { padding-right: 4px; border-top: 1px solid #ddd; font-weight: 400; text-align: right; vertical-align: top; line-height: 20px; }
.times tr { height: 22px; }
.times td { height: 22px; border-top: 1px solid #ddd; border-left: 1px solid #ddd; }
.times td:first-child { border-left: 0; }
.times .half td { border-top-style: dotted; }
.times .now { background: #fdf6e2; }

.scrollbar { display: flex; flex-direction: column; align-items: center; flex: none; padding: 9px 0 8px; background: #f0f0f0; }
.inner { width: 21px; }
.outer { width: 20px; }
.arrow { width: 10px; height: 6px; color: #505050; }
.faint { color: #a3a3a3; }
.track { display: flex; flex-direction: column; flex: 1; width: 17px; margin: 5px 0; }
.before { flex: 144; }
.thumb { background: #c1c1c1; }
.inner .thumb { flex: 337; }
.outer .thumb { flex: 790; }
.inner .after { flex: 95; }
.outer .after { flex: 55; }
.help { position: absolute; right: 0; top: 60px; width: 30px; height: 50px; padding: 0 0 0 3px; border: 0; border-radius: 3px 0 0 3px; background: rgba(66, 139, 202, 0.62); color: #fff; font: 800 30px/50px "Open Sans", sans-serif; }

.taskbar { position: relative; display: flex; align-items: stretch; height: 50px; flex: none; background: #222; color: #fff; font-family: "Open Sans", "Noto Sans", sans-serif; }
.start { width: 60px; }
.wide { width: 63px; padding-right: 3px; }
.launcher { width: 62px; border-bottom: 3px solid transparent; border-top: 3px solid transparent; }
.launcher.chrome { border-color: #515151; border-bottom-color: #76b9ed; background: #515151; }
.launcher.mouse { width: 52px; margin: 0 5px; border-bottom-color: #76b9ed; }
.tray { display: flex; align-items: center; gap: 12px; }
.tray-up { width: 18px; height: 10px; }
.lang { font-size: 14px; }
.tray-clock { display: flex; flex-direction: column; align-items: center; width: 72px; margin-right: 10px; font-size: 14px; line-height: 23px; white-space: nowrap; }
.ghost { width: 22px; margin-left: -2px; overflow: hidden; color: #0c0c0c; font-size: 16px; line-height: 30px; padding-top: 20px; }
</style>
